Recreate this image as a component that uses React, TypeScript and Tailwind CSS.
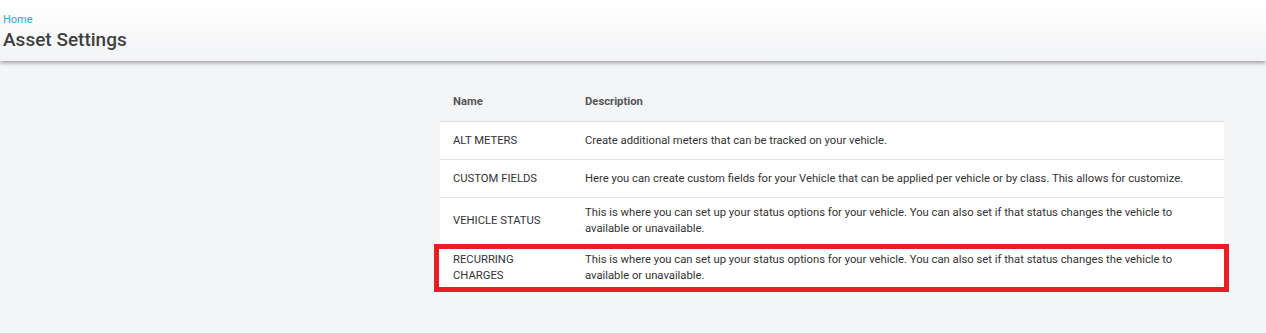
import React from "react";

const rows = [
  { name: "ALT METERS", description: "Create additional meters that can be tracked on your vehicle." },
  {
    name: "CUSTOM FIELDS",
    description:
      "Here you can create custom fields for your Vehicle that can be applied per vehicle or by class. This allows for customize.",
  },
  {
    name: "VEHICLE STATUS",
    description:
      "This is where you can set up your status options for your vehicle. You can also set if that status changes the vehicle to available or unavailable.",
  },
  {
    name: "RECURRING CHARGES",
    description:
      "This is where you can set up your status options for your vehicle. You can also set if that status changes the vehicle to available or unavailable.",
    highlighted: true,
  },
];

export default function App() {
  return (
    <div className="min-h-[333px] bg-[#f4f5f7] font-['Roboto',sans-serif]">
      {/* Page header */}
      <header className="relative z-10 h-[61px] bg-gradient-to-b from-white to-[#f3f4f6] px-[3px] pt-[13px] shadow-[0_2px_4px_rgba(0,0,0,0.35)]">
        <a className="block text-[11px] leading-[14px] text-[#29a9e8]">Home</a>
        <h1 className="mt-[1px] text-[19px] font-medium leading-[24px] text-[#3f3f3f]">Asset Settings</h1>
      </header>

      <div className="flex pt-[21px]">
        <div className="w-[440px] shrink-0" />
        <div className="w-[784px] text-[11.25px] leading-[16px] text-[#333]">
          {/* Column headings */}
          <div className="grid h-[40px] grid-cols-[132px_1fr] items-center border-b border-[#dcdcdc] px-[13px] pt-[1px] font-bold text-[#555]">
            <div>Name</div>
            <div>Description</div>
          </div>

          {rows.map((row) => (
            <div
              key={row.name}
              className="relative grid min-h-[38px] grid-cols-[132px_1fr] items-center border-b border-[#e2e2e2] bg-white px-[13px] py-[7px] last:border-b-0"
            >
              <div className="pr-[26px]">{row.name}</div>
              <div className="pr-[20px]">{row.description}</div>
              {row.highlighted && (
                <div className="pointer-events-none absolute -top-[1px] -bottom-[1px] -left-[6px] -right-[5px] border-[5px] border-[#ec1c24]" />
              )}
            </div>
          ))}
        </div>
      </div>
    </div>
  );
}
